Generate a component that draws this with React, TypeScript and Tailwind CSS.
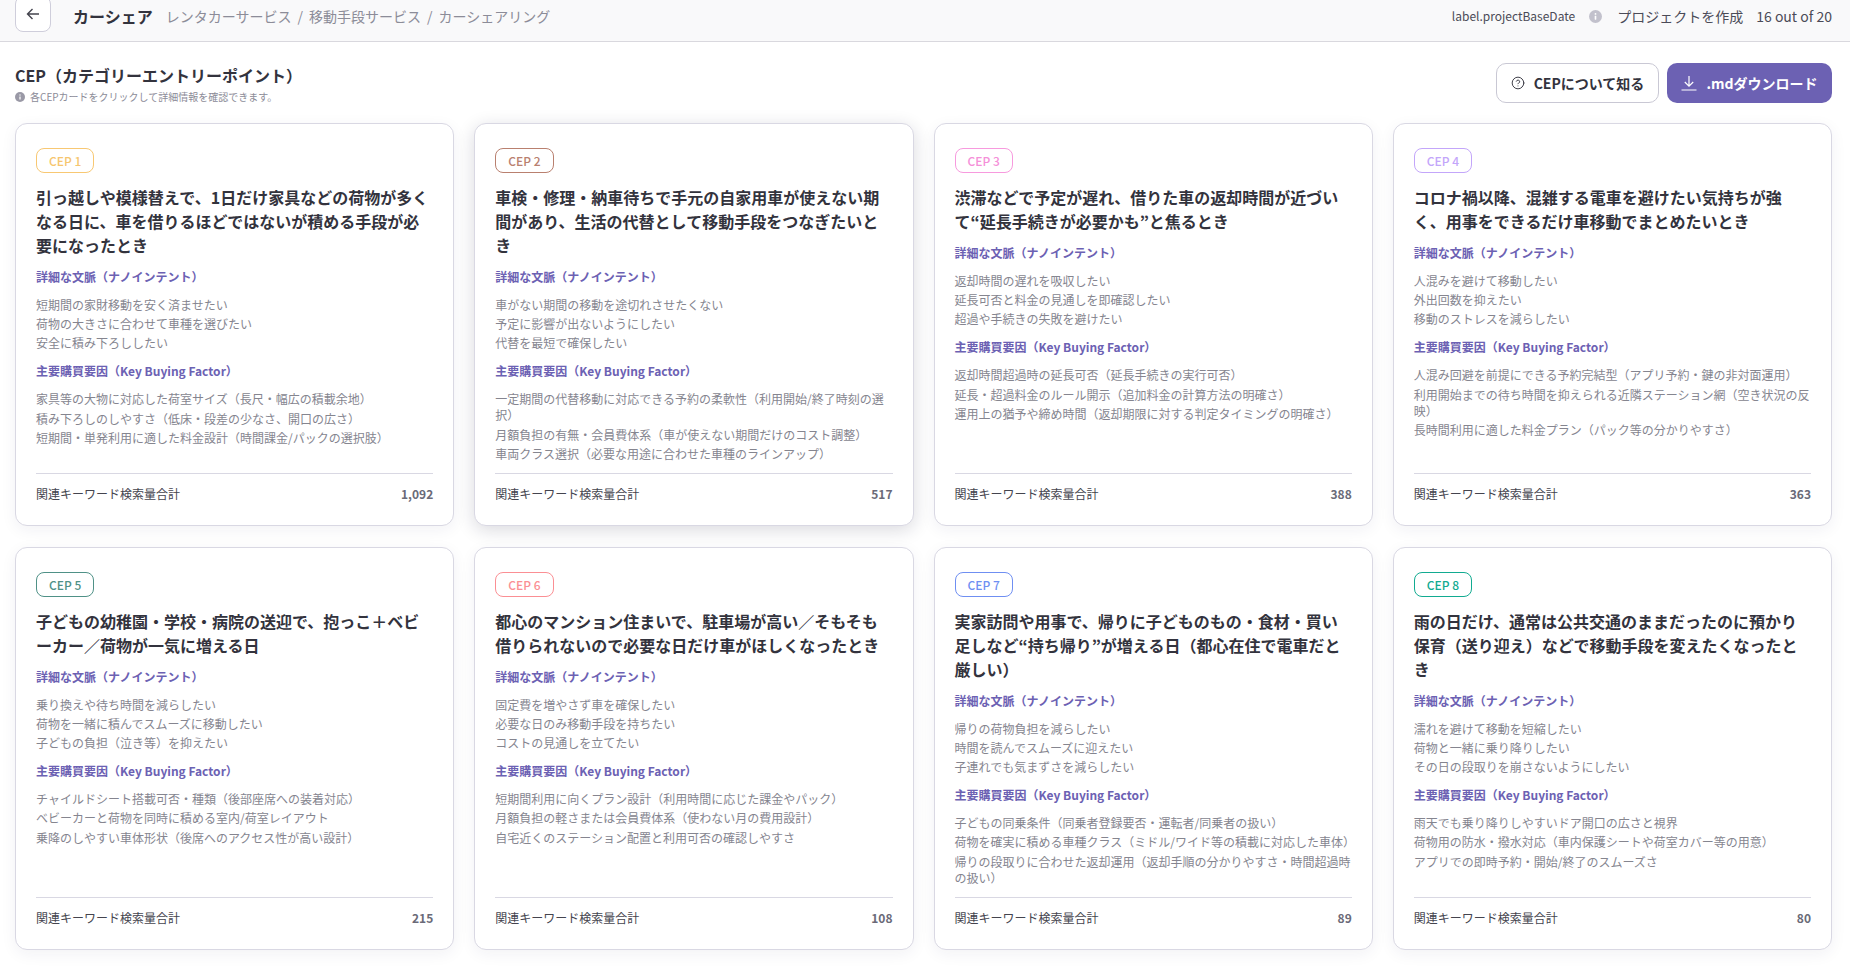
import { CircleHelp } from "lucide-react";

interface Cep {
  no: number;
  badge: string;
  title: string;
  nano: string[];
  kbf: string[];
  total: string;
}

const ceps: Cep[] = [
  {
    no: 1,
    badge: "border-[#f8c873] text-[#f6c66f]",
    title: "引っ越しや模様替えで、1日だけ家具などの荷物が多くなる日に、車を借りるほどではないが積める手段が必要になったとき",
    nano: ["短期間の家財移動を安く済ませたい", "荷物の大きさに合わせて車種を選びたい", "安全に積み下ろししたい"],
    kbf: [
      "家具等の大物に対応した荷室サイズ（長尺・幅広の積載余地）",
      "積み下ろしのしやすさ（低床・段差の少なさ、開口の広さ）",
      "短期間・単発利用に適した料金設計（時間課金/パックの選択肢）",
    ],
    total: "1,092",
  },
  {
    no: 2,
    badge: "border-[#b9806f] text-[#b9806f]",
    title: "車検・修理・納車待ちで手元の自家用車が使えない期間があり、生活の代替として移動手段をつなぎたいとき",
    nano: ["車がない期間の移動を途切れさせたくない", "予定に影響が出ないようにしたい", "代替を最短で確保したい"],
    kbf: [
      "一定期間の代替移動に対応できる予約の柔軟性（利用開始/終了時刻の選択）",
      "月額負担の有無・会員費体系（車が使えない期間だけのコスト調整）",
      "車両クラス選択（必要な用途に合わせた車種のラインアップ）",
    ],
    total: "517",
  },
  {
    no: 3,
    badge: "border-[#f79ade] text-[#f58fd9]",
    title: "渋滞などで予定が遅れ、借りた車の返却時間が近づいて“延長手続きが必要かも”と焦るとき",
    nano: ["返却時間の遅れを吸収したい", "延長可否と料金の見通しを即確認したい", "超過や手続きの失敗を避けたい"],
    kbf: [
      "返却時間超過時の延長可否（延長手続きの実行可否）",
      "延長・超過料金のルール開示（追加料金の計算方法の明確さ）",
      "運用上の猶予や締め時間（返却期限に対する判定タイミングの明確さ）",
    ],
    total: "388",
  },
  {
    no: 4,
    badge: "border-[#c3a6fa] text-[#c3a6fa]",
    title: "コロナ禍以降、混雑する電車を避けたい気持ちが強く、用事をできるだけ車移動でまとめたいとき",
    nano: ["人混みを避けて移動したい", "外出回数を抑えたい", "移動のストレスを減らしたい"],
    kbf: [
      "人混み回避を前提にできる予約完結型（アプリ予約・鍵の非対面運用）",
      "利用開始までの待ち時間を抑えられる近隣ステーション網（空き状況の反映）",
      "長時間利用に適した料金プラン（パック等の分かりやすさ）",
    ],
    total: "363",
  },
  {
    no: 5,
    badge: "border-[#4f9187] text-[#4f9187]",
    title: "子どもの幼稚園・学校・病院の送迎で、抱っこ＋ベビーカー／荷物が一気に増える日",
    nano: ["乗り換えや待ち時間を減らしたい", "荷物を一緒に積んでスムーズに移動したい", "子どもの負担（泣き等）を抑えたい"],
    kbf: [
      "チャイルドシート搭載可否・種類（後部座席への装着対応）",
      "ベビーカーと荷物を同時に積める室内/荷室レイアウト",
      "乗降のしやすい車体形状（後席へのアクセス性が高い設計）",
    ],
    total: "215",
  },
  {
    no: 6,
    badge: "border-[#fb8f94] text-[#fb8f94]",
    title: "都心のマンション住まいで、駐車場が高い／そもそも借りられないので必要な日だけ車がほしくなったとき",
    nano: ["固定費を増やさず車を確保したい", "必要な日のみ移動手段を持ちたい", "コストの見通しを立てたい"],
    kbf: [
      "短期間利用に向くプラン設計（利用時間に応じた課金やパック）",
      "月額負担の軽さまたは会員費体系（使わない月の費用設計）",
      "自宅近くのステーション配置と利用可否の確認しやすさ",
    ],
    total: "108",
  },
  {
    no: 7,
    badge: "border-[#6f8ff2] text-[#6f8ff2]",
    title: "実家訪問や用事で、帰りに子どものもの・食材・買い足しなど“持ち帰り”が増える日（都心在住で電車だと厳しい）",
    nano: ["帰りの荷物負担を減らしたい", "時間を読んでスムーズに迎えたい", "子連れでも気まずさを減らしたい"],
    kbf: [
      "子どもの同乗条件（同乗者登録要否・運転者/同乗者の扱い）",
      "荷物を確実に積める車種クラス（ミドル/ワイド等の積載に対応した車体）",
      "帰りの段取りに合わせた返却運用（返却手順の分かりやすさ・時間超過時の扱い）",
    ],
    total: "89",
  },
  {
    no: 8,
    badge: "border-[#12ab91] text-[#12ab91]",
    title: "雨の日だけ、通常は公共交通のままだったのに預かり保育（送り迎え）などで移動手段を変えたくなったとき",
    nano: ["濡れを避けて移動を短縮したい", "荷物と一緒に乗り降りしたい", "その日の段取りを崩さないようにしたい"],
    kbf: [
      "雨天でも乗り降りしやすいドア開口の広さと視界",
      "荷物用の防水・撥水対応（車内保護シートや荷室カバー等の用意）",
      "アプリでの即時予約・開始/終了のスムーズさ",
    ],
    total: "80",
  },
];

function InfoDot({ className }: { className: string }) {
  return (
    <svg viewBox="0 0 16 16" className={className}>
      <circle cx="8" cy="8" r="8" fill="currentColor" />
      <rect x="7" y="7" width="2" height="5" rx="0.5" fill="#fff" />
      <circle cx="8" cy="4.8" r="1.1" fill="#fff" />
    </svg>
  );
}

function TextList({ items }: { items: string[] }) {
  return (
    <ul className="mt-3 flex flex-col gap-[3.2px] text-xs leading-4 text-[#85858f]">
      {items.map((item) => (
        <li key={item}>{item}</li>
      ))}
    </ul>
  );
}

function CepCard({ cep }: { cep: Cep }) {
  return (
    <div
      className={`flex flex-col rounded-xl border border-[#d9d8e3] bg-white px-5 pt-6 pb-[23px] ${
        cep.no === 2 ? "shadow-[0_4px_18px_rgba(20,20,50,0.16)]" : "shadow-[0_4px_16px_rgba(40,40,90,0.06)]"
      }`}
    >
      <span className={`self-start rounded-lg border px-3 text-xs font-medium leading-[23px] ${cep.badge}`}>
        CEP {cep.no}
      </span>
      <h3 className="mt-3 text-base font-semibold leading-6 text-[#33333d]">{cep.title}</h3>
      <p className="mt-3 text-xs font-semibold leading-4 text-[#6c61b3]">詳細な文脈（ナノインテント）</p>
      <TextList items={cep.nano} />
      <p className="mt-3 text-xs font-semibold leading-4 text-[#6c61b3]">主要購買要因（Key Buying Factor）</p>
      <TextList items={cep.kbf} />
      <div className="mt-auto pt-[11px]">
        <div className="flex justify-between border-t border-[#d9d8e3] pt-3 text-xs leading-4">
          <span className="text-[#44444e]">関連キーワード検索量合計</span>
          <span className="font-semibold text-[#6a6a78]">{cep.total}</span>
        </div>
      </div>
    </div>
  );
}

export default function App() {
  return (
    <div className="min-h-screen bg-white font-['Noto_Sans_CJK_JP','Noto_Sans',sans-serif]">
      <header className="flex h-[42px] items-start justify-between overflow-hidden border-b border-[#d9d8de] bg-[#f9f9fa] pl-[15px] pr-[18px]">
        <div className="flex items-center">
          <button className="-mt-1 flex h-[36px] w-[36px] items-center justify-center rounded-lg border border-[#cfcedb] bg-white text-[#44444e]">
            <svg viewBox="0 0 16 16" className="h-[16px] w-[16px]" fill="none" stroke="currentColor" strokeWidth="1.4">
              <path d="M14 8H2.5M7.5 3 2.5 8l5 5" />
            </svg>
          </button>
          <span className="ml-[22px] text-base font-bold leading-[32px] text-[#33333d]">カーシェア</span>
          <nav className="ml-[13px] flex gap-[6px] text-sm leading-[32px] text-[#8c8c98]">
            <span>レンタカーサービス</span>
            <span>/</span>
            <span>移動手段サービス</span>
            <span>/</span>
            <span>カーシェアリング</span>
          </nav>
        </div>
        <div className="flex items-center text-[#4b4b57]">
          <span className="text-xs leading-[32px]">label.projectBaseDate</span>
          <InfoDot className="ml-[14px] h-[13px] w-[13px] text-[#c2c1cc]" />
          <span className="ml-[15px] text-sm leading-[32px]">プロジェクトを作成</span>
          <span className="ml-[13px] text-sm leading-[32px]">16 out of 20</span>
        </div>
      </header>

      <main className="pl-[15px] pr-[18px]">
        <div className="flex h-[81px] items-start justify-between">
          <div className="pt-[21px]">
            <h1 className="text-base font-semibold leading-6 text-[#33333d]">CEP（カテゴリーエントリーポイント）</h1>
            <p className="mt-[2px] flex items-center gap-[5px] text-[10px] leading-4 text-[#8c8c98]">
              <InfoDot className="h-[10px] w-[10px] text-[#9a99a6]" />
              各CEPカードをクリックして詳細情報を確認できます。
            </p>
          </div>
          <div className="flex gap-2 pt-[21px]">
            <button className="flex h-10 w-[163px] items-center justify-center gap-[9px] rounded-[10px] border border-[#c9c8d4] bg-white text-sm font-semibold text-[#33333d]">
              <CircleHelp className="h-[14px] w-[14px]" strokeWidth={1.6} />
              CEPについて知る
            </button>
            <button className="flex h-10 w-[165px] items-center justify-center gap-[9px] rounded-[10px] bg-[#6c61b3] text-sm font-semibold text-white">
              <svg viewBox="0 0 16 16" className="h-[16px] w-[16px]" fill="none" stroke="currentColor" strokeWidth="1.2">
                <path d="M8 1v10M3.8 7 8 11.2 12.2 7M0.5 15h15" />
              </svg>
              .mdダウンロード
            </button>
          </div>
        </div>
        <div className="grid grid-cols-4 gap-x-5 gap-y-[21px]">
          {ceps.map((cep) => (
            <CepCard key={cep.no} cep={cep} />
          ))}
        </div>
      </main>
    </div>
  );
}
